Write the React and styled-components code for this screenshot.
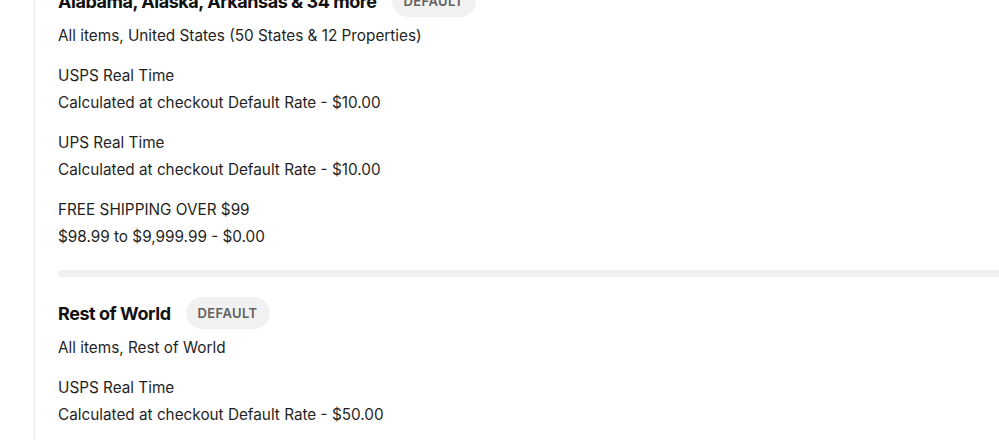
import styled, { createGlobalStyle } from "styled-components";

const GlobalStyle = createGlobalStyle`
  html, body {
    margin: 0;
    padding: 0;
    background: #ffffff;
    overflow: hidden;
  }
  body {
    font-family: Inter, "Noto Sans", "Liberation Sans", sans-serif;
    color: #1f1f1f;
  }
`;

const Page = styled.div`
  display: flex;
  padding-left: 34px;
  height: 440px;
`;

const Panel = styled.div`
  border-left: 1px solid #ebebeb;
  padding-left: 23px;
  width: 960px;
  margin-top: -15px;
  display: flex;
  flex-direction: column;
`;

const Zone = styled.section`
  display: flex;
  flex-direction: column;
`;

const ZoneHeader = styled.div`
  display: flex;
  align-items: center;
  gap: 15px;
  height: 32px;
  margin-bottom: 5px;
`;

const ZoneTitle = styled.h2`
  margin: 0;
  font-size: 18px;
  font-weight: 700;
  letter-spacing: -0.45px;
  color: #111111;
`;

const Badge = styled.span`
  display: inline-flex;
  align-items: center;
  height: 32px;
  padding: 0 12px;
  border-radius: 16px;
  background: #f1f1f1;
  color: #616161;
  font-size: 13px;
  font-weight: 600;
  letter-spacing: 0.4px;
`;

const Line = styled.div`
  font-size: 15.3px;
  line-height: 27px;
  height: 27px;
  white-space: nowrap;
`;

const Rate = styled.div`
  margin-top: 13px;
  display: flex;
  flex-direction: column;
`;

const Divider = styled.div`
  height: 7px;
  margin: 20px -40px 20px 0;
  background: #f1f1f1;
  border-radius: 4px;
`;

const zones = [
  {
    name: "Alabama, Alaska, Arkansas & 34 more",
    scope: "All items, United States (50 States & 12 Properties)",
    rates: [
      ["USPS Real Time", "Calculated at checkout Default Rate - $10.00"],
      ["UPS Real Time", "Calculated at checkout Default Rate - $10.00"],
      ["FREE SHIPPING OVER $99", "$98.99 to $9,999.99 - $0.00"],
    ],
  },
  {
    name: "Rest of World",
    scope: "All items, Rest of World",
    rates: [["USPS Real Time", "Calculated at checkout Default Rate - $50.00"]],
  },
];

const App = () => {
  return (
    <>
      <GlobalStyle />
      <Page>
        <Panel>
          {zones.map((zone, i) => (
            <div key={zone.name}>
              {i > 0 && <Divider />}
              <Zone>
                <ZoneHeader>
                  <ZoneTitle>{zone.name}</ZoneTitle>
                  <Badge>DEFAULT</Badge>
                </ZoneHeader>
                <Line>{zone.scope}</Line>
                {zone.rates.map(([title, detail]) => (
                  <Rate key={title}>
                    <Line>{title}</Line>
                    <Line>{detail}</Line>
                  </Rate>
                ))}
              </Zone>
            </div>
          ))}
        </Panel>
      </Page>
    </>
  );
};

export default App;
